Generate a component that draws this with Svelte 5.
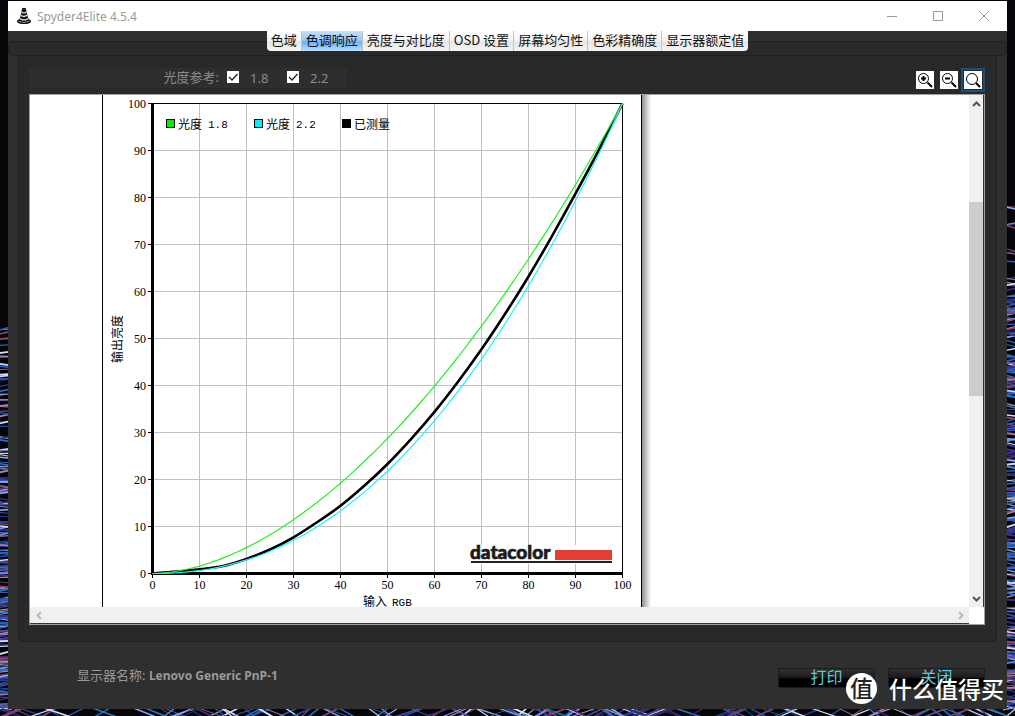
<script>
  const tabs = ['色域', '色调响应', '亮度与对比度', 'OSD 设置', '屏幕均匀性', '色彩精确度', '显示器额定值'];
  let active = $state(1);
  let show18 = $state(true);
  let show22 = $state(true);

  // Plot area inside the chart page
  const left = 50.5;
  const top = 8.5;
  const size = 470;
  const ticks = [0, 10, 20, 30, 40, 50, 60, 70, 80, 90, 100];
  const px = (v) => left + (v / 100) * size;
  const py = (v) => top + size - (v / 100) * size;

  function curve(gamma) {
    const points = [];
    for (let v = 0; v <= 100; v += 2) {
      points.push(`${px(v).toFixed(1)},${py(100 * Math.pow(v / 100, gamma)).toFixed(1)}`);
    }
    return points.join(' ');
  }

  // Measured luminance for every 5 steps of input, joined by a Catmull-Rom spline
  const measured = [0, 0.4, 0.9, 1.6, 3.1, 5.1, 7.7, 10.9, 14.4, 18.6, 23.3, 28.6, 34.4, 40.8, 47.7, 55.2, 63.2, 71.8, 80.8, 90.2, 100];
  function spline(values) {
    const at = (i) => {
      const k = Math.max(0, Math.min(values.length - 1, i));
      return [px(k * 5), py(values[k])];
    };
    let d = `M${at(0).join(' ')}`;
    for (let i = 0; i < values.length - 1; i++) {
      const [a, b, c, e] = [at(i - 1), at(i), at(i + 1), at(i + 2)];
      d += `C${b[0] + (c[0] - a[0]) / 6} ${b[1] + (c[1] - a[1]) / 6} ${c[0] - (e[0] - b[0]) / 6} ${c[1] - (e[1] - b[1]) / 6} ${c[0]} ${c[1]}`;
    }
    return d;
  }

  const legend = [
    { x: 64, color: '#00f000', label: '光度', value: '1.8' },
    { x: 152, color: '#00f0f8', label: '光度', value: '2.2' },
    { x: 240, color: '#000', label: '已测量', value: '' }
  ];

  // Light trails of the desktop wallpaper
  let seed = 11;
  const rand = () => {
    seed = (seed * 16807) % 2147483647;
    return seed / 2147483647;
  };
  const colors = ['#2a5fc0', '#24409a', '#7fa8e8', '#4a2a80', '#b080a8', '#d0dcf4', '#1f78c8', '#4a50a8', '#8a4a70'];
  const pick = () => colors[Math.floor(rand() * colors.length)];
  const trails = [];
  for (let i = 0; i < 190; i++) {
    const y = 330 + Math.pow(rand(), 0.9) * 380;
    trails.push({ x1: -4, y1: y, x2: 12, y2: y + (rand() - 0.6) * 7, c: pick(), w: 0.8 + rand() * 1.2 });
  }
  for (let i = 0; i < 260; i++) {
    const y = 205 + Math.pow(rand(), 0.7) * 505;
    trails.push({ x1: 1003, y1: y, x2: 1019, y2: y + (rand() - 0.5) * 11, c: pick(), w: 0.8 + rand() * 1.2 });
  }
  for (let i = 0; i < 170; i++) {
    const x = rand() * 1060 - 30;
    const run = (rand() < 0.4 ? 1 : -1) * (18 + rand() * 30);
    trails.push({ x1: x, y1: 704, x2: x + run, y2: 720, c: pick(), w: 0.8 + rand() });
  }
</script>

<div class="desktop">
  <svg class="wallpaper" viewBox="0 0 1015 716" preserveAspectRatio="none" aria-hidden="true">
    {#each trails as t}
      <line x1={t.x1} y1={t.y1} x2={t.x2} y2={t.y2} stroke={t.c} stroke-width={t.w} />
    {/each}
  </svg>

  <div class="window">
    <header class="titlebar">
      <svg class="logo" width="16" height="18" viewBox="0 0 16 18" aria-hidden="true">
        <path d="M6 1.5q2-1.6 4 0l.4 3.2 1.4 5 .7 2.3q3 1 2.5 2.7-1 2.3-7 2.3t-7-2.3q-.4-1.7 2.600-2.700L5.400 6z" fill="#151515" />
        <path d="M5.800 5.300q2.500 1.300 4.400-.2M4.900 8.500q3 2 6.200-.3M4 11.700q4 2.400 8 0" fill="none" stroke="#e8e8e8" stroke-width="1.200" />
        <path d="M2.500 14.300q5.500 2.500 11-.2" fill="none" stroke="#888" />
      </svg>
      <span class="title">Spyder4Elite 4.5.4</span>
      <div class="caption">
        <button aria-label="最小化"><svg width="12" height="12"><path d="M1 6.500h10" /></svg></button>
        <button aria-label="最大化"><svg width="12" height="12"><path d="M1.500 1.500h9v9h-9z" /></svg></button>
        <button aria-label="关闭窗口"><svg width="12" height="12"><path d="M1 1l10 10M11 1L1 11" /></svg></button>
      </div>
    </header>

    <nav class="tabrow">
      <div class="strip"></div>
      <div class="tabs" role="tablist">
        {#each tabs as tab, i}
          <button role="tab" aria-selected={active === i} class:active={active === i} onclick={() => (active = i)}>{tab}</button>
        {/each}
      </div>
    </nav>

    <main class="panel">
      <div class="toolbar">
        <div class="refs">
          <span class="caption-text">光度参考:</span>
          <label><input type="checkbox" bind:checked={show18} /><span>1.8</span></label>
          <label><input type="checkbox" bind:checked={show22} /><span>2.2</span></label>
        </div>
        <div class="zooms">
          <button aria-label="放大">
            <svg width="16" height="16"><circle cx="6.500" cy="6.500" r="5" /><path d="M4 6.500h5M6.500 4v5" stroke-width="2" /><path d="M10.500 10.500l4.500 4.500" stroke-width="2" /></svg>
          </button>
          <button aria-label="缩小">
            <svg width="16" height="16"><circle cx="6.500" cy="6.500" r="5" /><path d="M4 6.500h5" stroke-width="2" /><path d="M10.500 10.500l4.500 4.500" stroke-width="2" /></svg>
          </button>
          <button class="focus" aria-label="适合窗口">
            <svg width="16" height="16"><circle cx="7" cy="7" r="5.500" /><path d="M11 11l4 4" stroke-width="2" /></svg>
          </button>
        </div>
      </div>

      <section class="viewport">
        <div class="page">
          <svg class="chart" width="550" height="512" viewBox="0 0 550 512" role="img" aria-label="色调响应">
            <defs>
              <linearGradient id="edge">
                <stop offset="0" stop-color="#909090" />
                <stop offset="1" stop-color="#fff" />
              </linearGradient>
            </defs>
            <rect x="540" y="0" width="9" height="512" fill="url(#edge)" />
            <path d="M.5 0V512M539.500 0V512" stroke="#000" />

            <g stroke="#c0c0c0">
              {#each ticks.slice(1, 10) as t}
                <path d="M{px(t)} {top}V{top + size}M{left} {py(t)}H{left + size}" />
              {/each}
            </g>
            <rect x="367" y="450" width="146" height="19" fill="#fff" />
            <path d="M{left} {top}H{left + size}V{top + size}" fill="none" stroke="#000" />
            <path d="M50.500 8V480M49 478.500H521" fill="none" stroke="#000" stroke-width="3" />
            <g stroke="#000">
              {#each ticks as t}
                <path d="M46 {py(t)}h4M{px(t)} 479v4" />
              {/each}
            </g>

            <path d={spline(measured)} fill="none" stroke="#000" stroke-width="2.600" />
            {#if show18}<polyline points={curve(1.8)} fill="none" stroke="#20f020" stroke-width="1.200" />{/if}
            {#if show22}<polyline points={curve(2.2)} fill="none" stroke="#20f0f8" stroke-width="1.200" />{/if}

            <g class="num">
              {#each ticks as t}
                <text x="44" y={py(t) + 4} text-anchor="end">{t}</text>
                <text x={px(t)} y="494" text-anchor="middle">{t}</text>
              {/each}
            </g>
            {#each legend as item}
              <rect x={item.x + 0.5} y="24.500" width="8" height="8" fill={item.color} stroke="#000" />
              <text class="cjk" x={item.x + 12} y="34">{item.label}</text>
              <text class="mono" x={item.x + 42} y="33">{item.value}</text>
            {/each}
            <text class="cjk" x="261" y="511">输入</text>
            <text class="mono" x="290" y="511">RGB</text>
            <text class="cjk" transform="translate(20 268) rotate(-90)">输出亮度</text>

            <text class="brand" x="368" y="464">datacolor</text>
            <rect x="453" y="455" width="57" height="10" fill="#e63c32" />
            <rect x="369" y="466" width="141" height="2" fill="#222" />
          </svg>
        </div>
        <div class="vbar">
          <button aria-label="向上滚动"><svg width="9" height="6"><path d="M1 5l3.500-3.500L8 5" /></svg></button>
          <div class="track"><div class="thumb"></div></div>
          <button aria-label="向下滚动"><svg width="9" height="6"><path d="M1 1l3.500 3.500L8 1" /></svg></button>
        </div>
        <div class="hbar">
          <button aria-label="向左滚动"><svg width="6" height="9"><path d="M5 1L1.500 4.500 5 8" /></svg></button>
          <button aria-label="向右滚动"><svg width="6" height="9"><path d="M1 1l3.500 3.500L1 8" /></svg></button>
        </div>
      </section>
    </main>

    <footer class="footer">
      <p>显示器名称: <b>Lenovo Generic PnP-1</b></p>
      <div class="actions">
        <button>打印</button>
        <button>关闭</button>
      </div>
    </footer>
  </div>

  <div class="watermark"><span class="badge">值</span><span>什么值得买</span></div>
</div>

<style>
  :global(body) {
    background: #05050a;
  }
  .desktop {
    position: relative;
    display: flex;
    box-sizing: border-box;
    min-height: 100vh;
    padding: 1px 8px 7px;
    overflow: hidden;
    background: #05050a;
    font-family: 'Noto Sans', 'Noto Sans CJK SC', sans-serif;
    font-size: 13px;
  }
  .wallpaper {
    position: absolute;
    inset: 0;
    width: 100%;
    height: 100%;
  }
  button {
    margin: 0;
    padding: 0;
    border: 0;
    background: none;
    font: inherit;
  }
  svg {
    display: block;
  }
  .window {
    position: relative;
    flex: 1;
    min-width: 0;
    display: flex;
    flex-direction: column;
    background: #2f2f2f;
  }
  .titlebar {
    display: flex;
    align-items: center;
    height: 30px;
    padding-left: 8px;
    background: #fff;
    color: #999;
    font-size: 12px;
  }
  .title {
    margin-left: 5px;
  }
  .caption {
    display: flex;
    margin-left: auto;
  }
  .caption button {
    display: grid;
    place-items: center;
    width: 46px;
    height: 30px;
  }
  .caption path {
    fill: none;
    stroke: #999;
  }
  .tabrow {
    display: grid;
    height: 25px;
  }
  .strip,
  .tabs {
    grid-area: 1 / 1;
  }
  .strip {
    align-self: end;
    height: 13px;
    border: 1px solid #202020;
    border-radius: 4px;
    background: #2a2a2a;
  }
  .tabs {
    place-self: start center;
    position: relative;
    display: flex;
    height: 20px;
    overflow: hidden;
    border-radius: 0 0 4px 4px;
    background: linear-gradient(#fff, #f4f4f4 45%, #e4e4e4 55%, #f6f6f6);
  }
  .tabs button {
    padding: 0 4px 3px;
    border-right: 1px solid #c4c4c4;
    color: #111;
    font-family: 'Noto Sans CJK SC', sans-serif;
    line-height: 17px;
    white-space: nowrap;
  }
  .tabs button:last-child {
    border-right: 0;
  }
  .tabs .active {
    background: linear-gradient(#c4e0fc, #98c8fa 45%, #6cb0f6 55%, #b8e0ff);
  }
  .panel {
    flex: 1;
    display: flex;
    flex-direction: column;
    gap: 2px;
    margin: 0 10px;
    padding: 12px 11px 16px 10px;
    border: 1px solid #202020;
    border-top: 0;
    border-radius: 0 0 6px 6px;
    background: #292929;
  }
  .toolbar {
    display: flex;
    justify-content: space-between;
    align-items: flex-start;
    height: 24px;
  }
  .refs {
    display: flex;
    align-items: center;
    width: 318px;
    height: 20px;
    background: #2e2e2e;
    color: #8c8c8c;
  }
  .caption-text {
    width: 190px;
    margin-right: 8px;
    padding-bottom: 3px;
    text-align: right;
  }
  .refs label {
    display: flex;
    align-items: center;
    width: 60px;
  }
  .refs input {
    appearance: none;
    width: 12px;
    height: 12px;
    margin: 0 11px 2px 0;
    background: #fff;
  }
  .refs input:checked {
    background: #fff url("data:image/svg+xml,%3Csvg xmlns='http://www.w3.org/2000/svg' width='12' height='12'%3E%3Cpath d='M2 6l3 3 5.500-6' fill='none' stroke='%23222' stroke-width='1.300'/%3E%3C/svg%3E");
  }
  .zooms {
    display: flex;
  }
  .zooms button {
    border: 2px solid transparent;
    padding: 1px;
  }
  .zooms .focus {
    border-color: #17507e;
  }
  .zooms svg {
    padding: 1px;
    background: #fff;
  }
  .zooms circle,
  .zooms path {
    fill: none;
    stroke: #000;
  }
  .viewport {
    flex: 1;
    display: grid;
    grid-template-columns: 1fr 15px;
    grid-template-rows: 1fr 17px;
    border: 1px solid #a0a0a0;
    background: #fff;
  }
  .page {
    min-width: 0;
    overflow: hidden;
    padding-left: 72px;
  }
  .vbar {
    display: flex;
    flex-direction: column;
    border-right: 1px solid #333;
    background: #f0f0f0;
  }
  .vbar button,
  .hbar button {
    display: grid;
    place-items: center;
    width: 14px;
    height: 17px;
  }
  .vbar path,
  .hbar path {
    fill: none;
    stroke: #555;
    stroke-width: 2;
  }
  .hbar path {
    stroke: #b8b8b8;
  }
  .track {
    flex: 1;
    display: flex;
    flex-direction: column;
  }
  .track::before {
    content: '';
    flex: 90;
  }
  .track::after {
    content: '';
    flex: 194;
  }
  .thumb {
    flex: 194;
    background: #cdcdcd;
  }
  .hbar {
    display: flex;
    justify-content: space-between;
    align-items: center;
    border-bottom: 1px solid #333;
    background: #f0f0f0;
  }
  .hbar button {
    width: 17px;
    height: 16px;
  }
  .num {
    font: 12px 'Liberation Serif', serif;
  }
  .cjk {
    font: 12px 'Noto Sans CJK SC', sans-serif;
  }
  .mono {
    font: 11px 'Liberation Mono', monospace;
  }
  .brand {
    font: 900 19px Lato, sans-serif;
    fill: #1c1c1c;
    stroke: #1c1c1c;
    stroke-width: 0.7px;
  }
  .footer {
    display: flex;
    justify-content: space-between;
    align-items: flex-start;
    height: 43px;
    padding: 24px 22px 0 69px;
    color: #999;
  }
  .footer p {
    margin: 0;
    line-height: 18px;
  }
  .footer b {
    font-size: 12px;
  }
  .actions {
    display: flex;
    gap: 13px;
    padding-top: 2px;
  }
  .actions button {
    width: 97px;
    height: 20px;
    padding-bottom: 4px;
    border: 1px solid #1c1c1c;
    border-radius: 2px;
    background: linear-gradient(#303030, #1c1c1c 45%, #000 55%);
    color: #5cc8dc;
    font-family: 'Noto Sans CJK SC', sans-serif;
    font-size: 16px;
    line-height: 14px;
  }
  .watermark {
    position: absolute;
    right: 11px;
    bottom: 12px;
    display: flex;
    align-items: center;
    gap: 12px;
    color: #fff;
    font: 500 23px/32px 'Noto Sans CJK SC', sans-serif;
  }
  .badge {
    width: 31px;
    height: 31px;
    border-radius: 50%;
    background: #fff;
    color: #222;
    line-height: 29px;
    text-align: center;
  }
</style>
